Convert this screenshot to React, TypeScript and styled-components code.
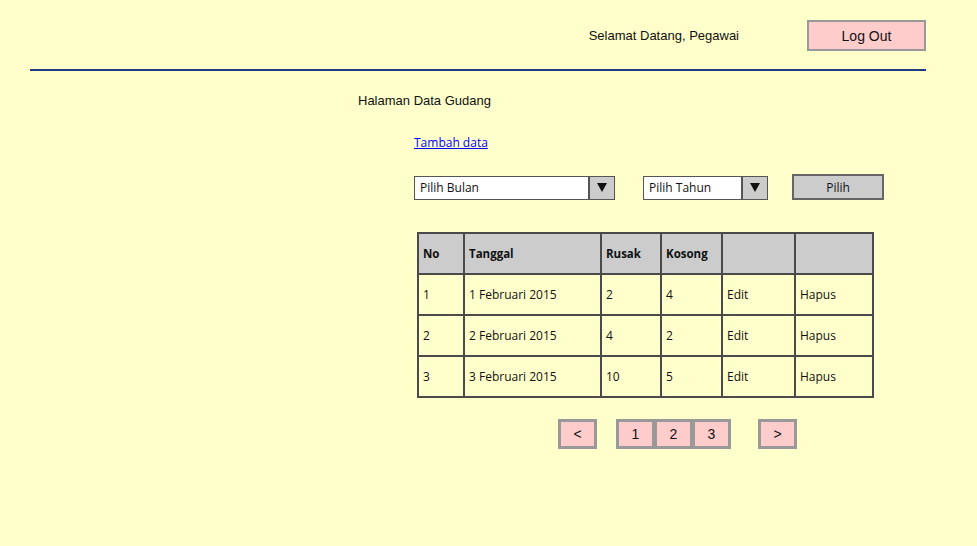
import React from "react";
import styled, { createGlobalStyle } from "styled-components";

const Global = createGlobalStyle`
  html, body { margin: 0; padding: 0; background: #ffffcc; }
  body { font-family: "Liberation Sans", Arial, sans-serif; color: #111; }
`;

const Page = styled.div`
  width: 977px;
  min-height: 546px;
  background: #ffffcc;
  overflow: hidden;
`;

const Header = styled.header`
  margin-left: 30px;
  width: 896px;
  padding-top: 20px;
  display: flex;
  justify-content: flex-end;
  align-items: center;
  gap: 68px;
  padding-bottom: 18px;
  border-bottom: 2px solid #1f3a80;
`;

const Welcome = styled.span`
  font-size: 13px;
  color: #111;
`;

const LogOut = styled.button`
  width: 119px;
  height: 31px;
  background: #ffcccc;
  border: 2px solid #999;
  font-family: "Liberation Sans", Arial, sans-serif;
  font-size: 14px;
  color: #111;
  padding: 0;
`;

const Main = styled.main`
  padding-left: 358px;
  padding-top: 22px;
`;

const Title = styled.h1`
  margin: 0;
  font-size: 13px;
  font-weight: normal;
  line-height: 16px;
  color: #111;
`;

const Content = styled.div`
  margin-left: 56px;
  font-family: "Open Sans", "DejaVu Sans", sans-serif;
`;

const AddLink = styled.a`
  display: inline-block;
  margin-top: 26px;
  font-size: 12px;
  line-height: 16px;
  color: #0000ff;
  text-decoration: underline;
`;

const Filters = styled.div`
  display: flex;
  align-items: center;
  margin-top: 22px;
  height: 26px;
`;

const Select = styled.div<{ $w: number }>`
  width: ${(p) => p.$w}px;
  height: 24px;
  box-sizing: border-box;
  border: 1px solid #555;
  background: #fff;
  display: flex;
  align-items: stretch;
  margin-right: 28px;
  margin-top: 1px;
`;

const SelectText = styled.span`
  flex: 1;
  font-size: 12px;
  line-height: 22px;
  padding-left: 5px;
  color: #111;
`;

const Arrow = styled.span`
  width: 24px;
  background: #cccccc;
  border-left: 2px solid #555;
  display: flex;
  align-items: center;
  justify-content: center;
`;

const FilterButton = styled.button`
  margin-left: -4px;
  width: 92px;
  height: 26px;
  box-sizing: border-box;
  background: #cccccc;
  border: 2px solid #666;
  font-family: "Open Sans", "DejaVu Sans", sans-serif;
  font-size: 12px;
  color: #111;
  padding: 0;
`;

const Table = styled.table`
  margin-top: 32px;
  margin-left: 3px;
  border-collapse: collapse;
  border: 2px solid #111;
  width: 455px;
  table-layout: fixed;
`;

const Th = styled.th`
  height: 39px;
  background: #cccccc;
  border: 2px solid #4a4a4a;
  text-align: left;
  padding: 0 0 0 4px;
  font-size: 11.5px;
  font-weight: 700;
  color: #111;
`;

const Td = styled.td`
  height: 39px;
  border: 2px solid #4a4a4a;
  padding: 0 0 0 4px;
  font-size: 12px;
  color: #111;
  white-space: nowrap;
  overflow: hidden;
`;

const Pager = styled.nav`
  display: flex;
  align-items: center;
  margin-top: 21px;
  margin-left: 144px;
`;

const PageGroup = styled.div`
  display: flex;
  margin: 0 27px 0 19px;
`;

const PageBtn = styled.button`
  width: 39px;
  height: 30px;
  box-sizing: border-box;
  background: #ffcccc;
  border: 3px solid #999;
  font-family: "Liberation Sans", Arial, sans-serif;
  font-size: 14px;
  color: #111;
  padding: 0;
  & + & { margin-left: -1px; }
`;

const cols: [string, number][] = [
  ["No", 46],
  ["Tanggal", 137],
  ["Rusak", 60],
  ["Kosong", 61],
  ["", 73],
  ["", 78],
];

const rows = [
  ["1", "1 Februari 2015", "2", "4"],
  ["2", "2 Februari 2015", "4", "2"],
  ["3", "3 Februari 2015", "10", "5"],
];

const Tri = () => (
  <svg width="10" height="9" viewBox="0 0 10 9">
    <path d="M0 0 H10 L5 9 Z" fill="#111" />
  </svg>
);

export default function App() {
  return (
    <Page>
      <Global />
      <Header>
        <Welcome>Selamat Datang, Pegawai</Welcome>
        <LogOut>Log Out</LogOut>
      </Header>
      <Main>
        <Title>Halaman Data Gudang</Title>
        <Content>
          <AddLink href="#">Tambah data</AddLink>
          <Filters>
            <Select $w={201}>
              <SelectText>Pilih Bulan</SelectText>
              <Arrow><Tri /></Arrow>
            </Select>
            <Select $w={125}>
              <SelectText>Pilih Tahun</SelectText>
              <Arrow><Tri /></Arrow>
            </Select>
            <FilterButton>Pilih</FilterButton>
          </Filters>
          <Table>
            <colgroup>
              {cols.map(([, w], i) => (
                <col key={i} style={{ width: w }} />
              ))}
            </colgroup>
            <thead>
              <tr>
                {cols.map(([c], i) => (
                  <Th key={i}>{c}</Th>
                ))}
              </tr>
            </thead>
            <tbody>
              {rows.map((r) => (
                <tr key={r[0]}>
                  {r.map((c, i) => (
                    <Td key={i}>{c}</Td>
                  ))}
                  <Td>Edit</Td>
                  <Td>Hapus</Td>
                </tr>
              ))}
            </tbody>
          </Table>
          <Pager>
            <PageBtn>&lt;</PageBtn>
            <PageGroup>
              <PageBtn>1</PageBtn>
              <PageBtn>2</PageBtn>
              <PageBtn>3</PageBtn>
            </PageGroup>
            <PageBtn>&gt;</PageBtn>
          </Pager>
        </Content>
      </Main>
    </Page>
  );
}
